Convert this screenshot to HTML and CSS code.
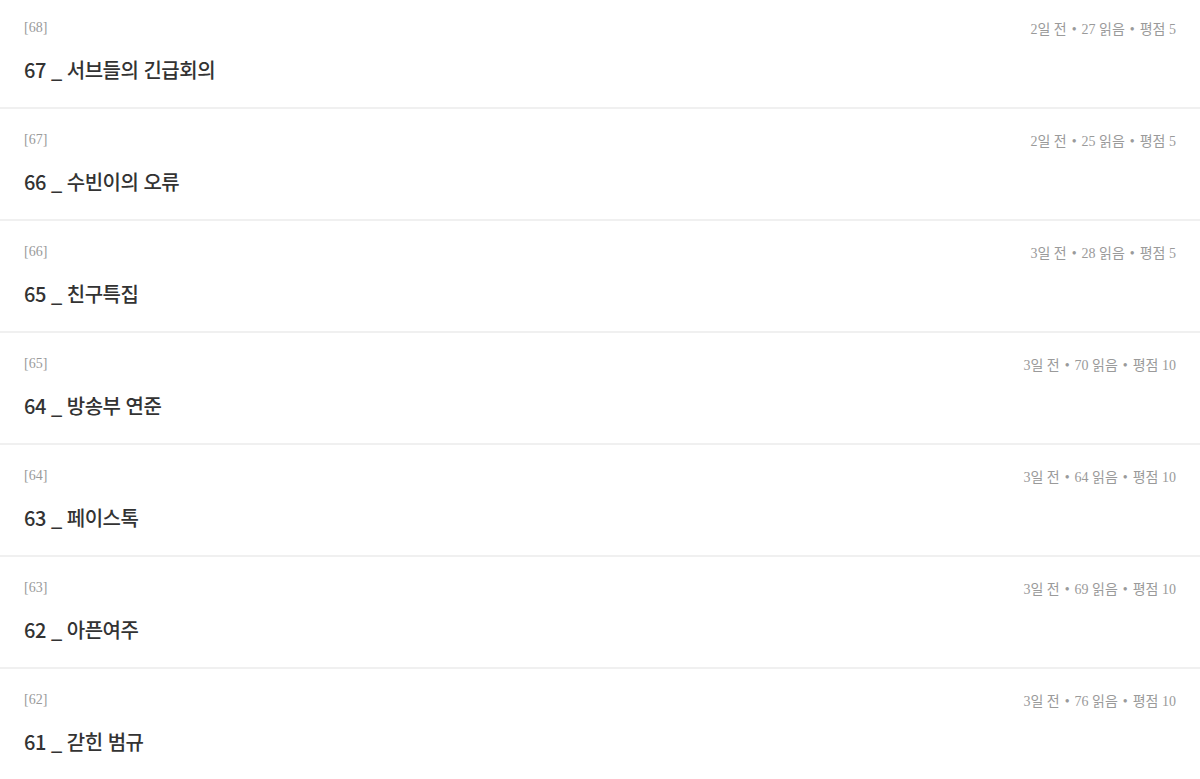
FILE: index.html
```html
<!DOCTYPE html>
<html lang="ko">
<head>
<meta charset="utf-8">
<link rel="stylesheet" href="styles.css">
</head>
<body>
<ul class="list">
  <li class="item"><div class="meta"><span class="no">[68]</span><span class="info">2일 전<span class="dot">•</span>27 읽음<span class="dot">•</span>평점 5</span></div><div class="title">67 _ 서브들의 긴급회의</div></li>
  <li class="item"><div class="meta"><span class="no">[67]</span><span class="info">2일 전<span class="dot">•</span>25 읽음<span class="dot">•</span>평점 5</span></div><div class="title">66 _ 수빈이의 오류</div></li>
  <li class="item"><div class="meta"><span class="no">[66]</span><span class="info">3일 전<span class="dot">•</span>28 읽음<span class="dot">•</span>평점 5</span></div><div class="title">65 _ 친구특집</div></li>
  <li class="item"><div class="meta"><span class="no">[65]</span><span class="info">3일 전<span class="dot">•</span>70 읽음<span class="dot">•</span>평점 10</span></div><div class="title">64 _ 방송부 연준</div></li>
  <li class="item"><div class="meta"><span class="no">[64]</span><span class="info">3일 전<span class="dot">•</span>64 읽음<span class="dot">•</span>평점 10</span></div><div class="title">63 _ 페이스톡</div></li>
  <li class="item"><div class="meta"><span class="no">[63]</span><span class="info">3일 전<span class="dot">•</span>69 읽음<span class="dot">•</span>평점 10</span></div><div class="title">62 _ 아픈여주</div></li>
  <li class="item"><div class="meta"><span class="no">[62]</span><span class="info">3일 전<span class="dot">•</span>76 읽음<span class="dot">•</span>평점 10</span></div><div class="title">61 _ 갇힌 범규</div></li>
</ul>
</body>
</html>
```
FILE: styles.css
```css
html, body {
  margin: 0;
  padding: 0;
  background: #fff;
}
body {
  font-family: "Liberation Serif", "Noto Sans CJK KR", serif;
}
.list {
  list-style: none;
  margin: 0;
  padding: 0;
}
.item {
  padding: 16px 24px 22px;
  border-bottom: 2px solid #f0f0f0;
  margin-bottom: 3px;
}
.meta {
  display: flex;
  justify-content: space-between;
  align-items: center;
  height: 24px;
  font-size: 14px;
  color: #9a9a9a;
}
.dot {
  margin: 0 5px;
}
.title {
  margin-top: 15px;
  line-height: 30px;
  font-family: "Noto Sans CJK KR", "Liberation Sans", sans-serif;
  font-size: 20px;
  font-weight: 500;
  color: #333;
  letter-spacing: -0.5px;
}
```
